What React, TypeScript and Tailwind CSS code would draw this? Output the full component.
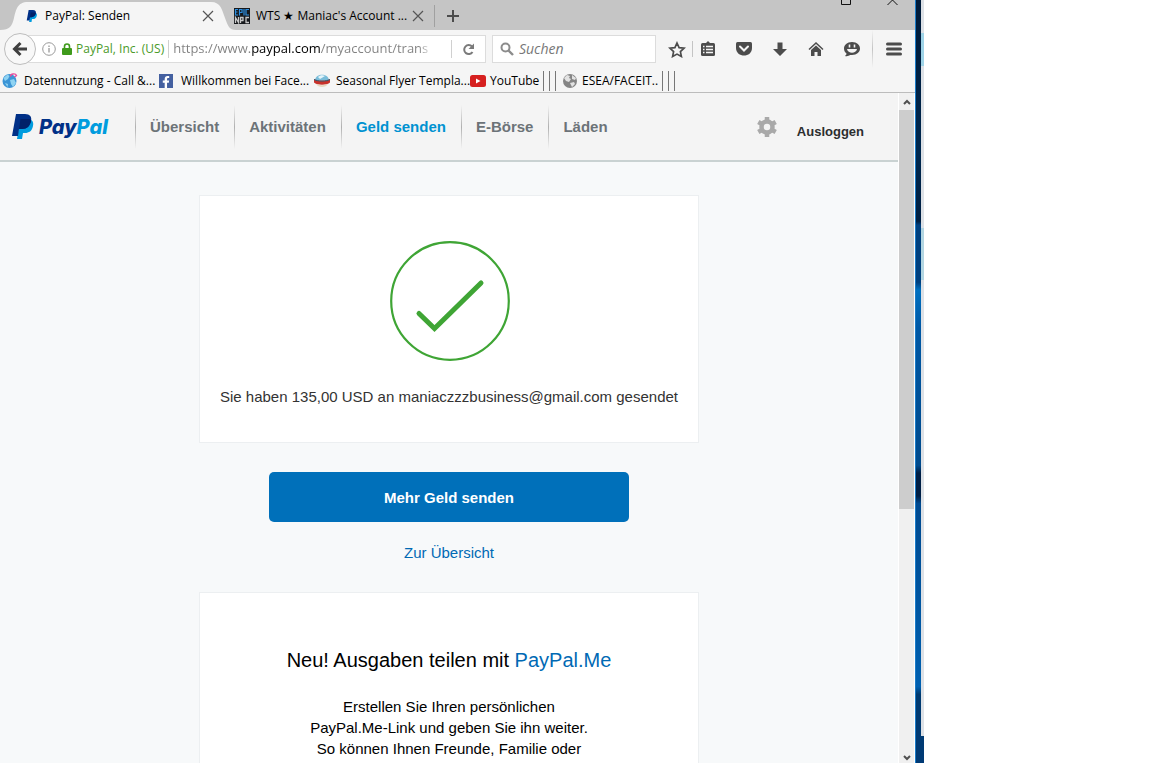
import type { ReactNode } from "react";
import { FaFacebookF } from "react-icons/fa";

const PayPalMark = ({ className }: { className: string }) => (
  <svg viewBox="0 0 22 25" className={className} aria-hidden="true">
    <path d="M8 5h8c4 0 6 3 5 7-1 5-4 7-8 7h-2l-1 6H5z" fill="#009cde" />
    <path d="M4 0h9c5 0 7 3 6 7-1 5-4 8-9 8H7l-1 7H0z" fill="#003087" />
    <path d="M8.500 5H16c1.500 0 2.500.4 3 1v1c-1 5-4 8-9 8H7z" fill="#012169" />
  </svg>
);

const CloseIcon = () => (
  <svg viewBox="0 0 12 12" className="size-3" aria-hidden="true">
    <path d="M1 1l10 10M11 1L1 11" stroke="#555" strokeWidth="1.2" fill="none" />
  </svg>
);

const EpicIcon = () => (
  <svg viewBox="0 0 16 16" className="size-4 shrink-0" aria-hidden="true">
    <path d="M0 0h16v16H0z" fill="#17191c" />
    <path d="M4 1.500H1.500v5.500H4M1.500 4h2M5.500 7.500v-6H8v3H5.500M10 1v6.500M15 1.500h-3V7h3" stroke="#2e8fe0" strokeWidth="1.2" fill="none" />
    <path d="M1.500 15V9.500l3 5V9M6.500 15V9.500H9v3H6.500M15 9.500h-3v5h3" stroke="#c9c9c9" strokeWidth="1.300" fill="none" />
  </svg>
);

const GlobeIcon = () => (
  <svg viewBox="0 0 16 16" className="size-4 shrink-0" aria-hidden="true">
    <circle cx="7.500" cy="8" r="7" fill="#3c95d6" />
    <path d="M1.500 5l4-3.500 2 1.500-1.500 3-3 2zM8 7l4-1 2 4-3 4-2-3zM3 10l3 1-.5 3z" fill="#8fd3f2" />
    <path d="M8.500 3.500c0-3 5-3.500 6-1l-2 1.500" stroke="#ea4c9b" strokeWidth="1.400" fill="none" />
  </svg>
);

const FlyerIcon = () => (
  <svg viewBox="0 0 16 16" className="size-4 shrink-0" aria-hidden="true">
    <path d="M1 7c1-7 13-7 14 0z" fill="#79bcd9" />
    <path d="M4 4c2-2 5-2 7-1L6 6z" fill="#e4f4fa" />
    <path d="M0 6c4 2 12 2 16 0v3.500c-3 3-13 3-16 0z" fill="#c8322b" />
    <path d="M0 6.500c4 2 12 2 16 0" stroke="#23607a" fill="none" />
    <path d="M2 11c3 1.500 9 1.500 12 0-2 4-10 4-12 0z" fill="#e8d8c0" />
  </svg>
);

const GrayGlobeIcon = () => (
  <svg viewBox="0 0 16 16" className="size-4 shrink-0" aria-hidden="true">
    <circle cx="8" cy="8" r="7" fill="#858585" />
    <path d="M2 5l3-3 3 1-1 2 2 1-2 3-3-1zM10 2l4 3-1 2-3-1zM8 10l4-1 1 2-3 3z" fill="#e2e2e2" />
  </svg>
);

const YouTubeIcon = () => (
  <svg viewBox="0 0 16 12" className="h-3 w-4 shrink-0" aria-hidden="true">
    <rect width="16" height="12" rx="2.500" fill="#d6201f" />
    <path d="M6 3.500v5L10.500 6z" fill="#fff" />
  </svg>
);

const FacebookIcon = () => (
  <span className="flex size-3.5 shrink-0 items-end justify-center bg-[#4460a0]">
    <FaFacebookF className="size-3 text-white" />
  </span>
);

const toolbarIcons: { label: string; icon: ReactNode }[] = [
  {
    label: "Lesezeichen anzeigen",
    icon: (
      <>
        <path d="M6 2.500h4M8 .5v2" stroke="#4c4c4c" strokeWidth="2" />
        <rect x="1" y="2" width="14" height="13" rx="1.500" fill="#4c4c4c" />
        <path d="M3 5.500h1.500M6 5.500h7M3 8.500h1.500M6 8.500h7M3 11.500h1.500M6 11.500h7" stroke="#f5f5f5" strokeWidth="1.500" />
      </>
    ),
  },
  {
    label: "Pocket",
    icon: (
      <>
        <path d="M1.500 1h13Q16 1 16 2.500V7c0 10-16 10-16 0V2.500Q0 1 1.500 1z" fill="#4c4c4c" />
        <path d="M4 5.500l4 4 4-4" stroke="#f5f5f5" strokeWidth="2" strokeLinecap="round" fill="none" />
      </>
    ),
  },
  {
    label: "Downloads",
    icon: <path d="M5.500 1.500h5V8H15l-7 7-7-7h4.500z" fill="#4c4c4c" />,
  },
  {
    label: "Startseite",
    icon: (
      <>
        <path d="M1 8.500l7-6.500 7 6.500" stroke="#4c4c4c" strokeWidth="1.500" fill="none" />
        <path d="M3 9l5-4.500L13 9v6H9.500v-4h-3v4H3z" fill="#4c4c4c" />
      </>
    ),
  },
  {
    label: "Chat",
    icon: (
      <>
        <path d="M8 1c5 0 8 3 8 6.500S13 14 8 14l-2 0c-1 1-3 1.500-5 1 1-1 1.500-1.500 1.500-2.500C1 11.500 0 9.500 0 7.500 0 4 3 1 8 1z" fill="#4c4c4c" />
        <path d="M5.500 3.500v3M10.500 3.500v3" stroke="#f5f5f5" strokeWidth="1.600" />
        <path d="M3 8h10c-1 5-9 5-10 0z" fill="#f5f5f5" />
      </>
    ),
  },
];

const navItems = ["Übersicht", "Aktivitäten", "Geld senden", "E-Börse", "Läden"];

const TabStrip = () => (
  <div className="flex h-[30px] items-stretch bg-[#c5c5c5]">
    <div className="relative flex w-[233px] items-center pt-0.5 pr-[19px] pl-6">
      <svg viewBox="0 0 236 30" className="absolute top-0 left-0 h-[30px] w-[236px]" aria-hidden="true">
        <path d="M0 30C10 30 12 26 14 18S17 2 28 2H211C221 2 222 10 225 18S229 30 236 30z" fill="#f5f5f5" />
      </svg>
      <PayPalMark className="relative mr-[7px] ml-0.5 size-3" />
      <span className="relative flex-1">PayPal: Senden</span>
      <button type="button" aria-label="Tab schließen" className="relative">
        <CloseIcon />
      </button>
    </div>
    <div className="flex w-[202px] items-center gap-1.5 pt-0.5 pl-px">
      <EpicIcon />
      <span className="min-w-0 flex-1 whitespace-nowrap">WTS ★ Maniac's Account ...</span>
      <button type="button" aria-label="Tab schließen" className="mr-1">
        <CloseIcon />
      </button>
      <span className="h-[22px] w-px shrink-0 bg-[#a0a0a0]" />
    </div>
    <button type="button" aria-label="Neuer Tab" className="px-3 pt-0.5">
      <svg viewBox="0 0 12 12" className="size-3" aria-hidden="true">
        <path d="M6 0v12M0 6h12" stroke="#4c4c4c" strokeWidth="2" />
      </svg>
    </button>
    <div className="ml-auto flex items-start gap-9 pr-[17px]">
      <button type="button" aria-label="Maximieren">
        <svg viewBox="0 0 10 5" className="h-[5px] w-2.5" aria-hidden="true">
          <path d="M.5 0v4.500h9V0" stroke="#111" fill="none" />
        </svg>
      </button>
      <button type="button" aria-label="Schließen">
        <svg viewBox="0 0 11 5" className="h-[5px] w-[11px]" aria-hidden="true">
          <path d="M.5 5l5-5 5 5" stroke="#111" fill="none" />
        </svg>
      </button>
    </div>
  </div>
);

const Toolbar = () => (
  <div className="flex h-[38px] items-center bg-[#f5f5f5] pl-1">
    <button
      type="button"
      aria-label="Zurück"
      className="z-10 flex size-8 shrink-0 items-center justify-center rounded-full border border-[#bdbdbd] bg-[#f8f8f8]"
    >
      <svg viewBox="0 0 16 16" className="size-4" aria-hidden="true">
        <path d="M8.500 2L2.500 8l6 6M3 8h12" stroke="#404040" strokeWidth="3" fill="none" />
      </svg>
    </button>
    <div className="-ml-3 flex h-7 min-w-0 flex-1 items-center border border-[#dcdcdc] bg-white pl-[17px]">
      <svg viewBox="0 0 14 14" className="mr-1.5 size-3.5 shrink-0" aria-hidden="true">
        <circle cx="7" cy="7" r="6.300" stroke="#999" fill="none" />
        <path d="M7 6v4.500M7 3.500V5" stroke="#999" strokeWidth="1.300" />
      </svg>
      <svg viewBox="0 0 10 12" className="mr-1 h-3 w-2.5 shrink-0" aria-hidden="true">
        <path d="M2.500 6V3.500a2.500 2.500 0 015 0V6" stroke="#3f9a1c" strokeWidth="1.600" fill="none" />
        <rect y="5" width="10" height="7" rx="1" fill="#3f9a1c" />
      </svg>
      <span className="shrink-0 whitespace-nowrap text-[#4a9a28]">PayPal, Inc. (US)</span>
      <span className="mx-1 h-[18px] w-px shrink-0 bg-[#d0d0d0]" />
      <input
        type="text"
        aria-label="Adresse"
        defaultValue="https://www.paypal.com/myaccount/trans"
        className="min-w-0 flex-1 bg-[linear-gradient(to_right,#808080_78px,#000_78px,#000_147px,#808080_147px,#808080_246px,transparent_260px)] bg-clip-text text-[13px] text-transparent outline-none"
      />
      <span className="ml-5 h-[18px] w-px shrink-0 bg-[#d0d0d0]" />
      <button type="button" aria-label="Neu laden" className="px-2.5">
        <svg viewBox="0 0 13 13" className="size-[13px]" aria-hidden="true">
          <path d="M10 3.500A4.500 4.500 0 1010.500 9" stroke="#7a7a7a" strokeWidth="2" fill="none" />
          <path d="M12 .5V6H6.500z" fill="#7a7a7a" />
        </svg>
      </button>
    </div>
    <label className="ml-1.5 flex h-7 w-[164px] items-center border border-[#dcdcdc] bg-white pl-[7px]">
      <svg viewBox="0 0 14 14" className="mr-[5px] size-3.5 shrink-0" aria-hidden="true">
        <circle cx="5.500" cy="5.500" r="4" stroke="#8c8c8c" strokeWidth="2" fill="none" />
        <path d="M8.500 8.500l4.500 4.500" stroke="#8c8c8c" strokeWidth="2.400" />
      </svg>
      <input
        type="text"
        aria-label="Suchen"
        placeholder="Suchen"
        className="min-w-0 flex-1 text-sm italic outline-none placeholder:text-[#777]"
      />
    </label>
    <button type="button" aria-label="Lesezeichen hinzufügen" className="ml-3 pr-1.5">
      <svg viewBox="0 0 18 17" className="h-[17px] w-[18px]" aria-hidden="true">
        <path d="M9 2l2.100 4.600 5 .6-3.700 3.400 1 4.900L9 13.100l-4.400 2.400 1-4.900L1.900 7.200l5-.6z" stroke="#4c4c4c" strokeWidth="1.700" fill="none" />
      </svg>
    </button>
    <span className="h-4 w-px bg-[#c4c4c4]" />
    <div className="ml-[7px] flex gap-5">
      {toolbarIcons.map((item) => (
        <button key={item.label} type="button" aria-label={item.label}>
          <svg viewBox="0 0 16 16" className="size-4" aria-hidden="true">
            {item.icon}
          </svg>
        </button>
      ))}
    </div>
    <span className="ml-3 h-full w-px bg-linear-to-b from-transparent via-[#c4c4c4] to-transparent" />
    <button type="button" aria-label="Menü" className="px-[13px]">
      <svg viewBox="0 0 16 14" className="h-3.5 w-4" aria-hidden="true">
        <path d="M1.500 2h13M1.500 7h13M1.500 12h13" stroke="#4c4c4c" strokeWidth="3" strokeLinecap="round" />
      </svg>
    </button>
  </div>
);

const Separators = () => (
  <span className="flex gap-[5px]">
    <span className="h-5 w-px bg-[#777]" />
    <span className="h-5 w-px bg-[#777]" />
    <span className="h-5 w-px bg-[#777]" />
  </span>
);

const Bookmark = ({ icon, label, className }: { icon: ReactNode; label: string; className: string }) => (
  <a href="#" className={`flex items-center whitespace-nowrap ${className}`}>
    {icon}
    {label}
  </a>
);

const BookmarksBar = () => (
  <div className="flex h-[25px] items-center border-b border-[#bcbcbc] bg-[#f5f5f5] pt-px pl-0.5">
    <Bookmark icon={<GlobeIcon />} label="Datennutzung - Call &..." className="w-[157px] gap-1.5" />
    <Bookmark icon={<FacebookIcon />} label="Willkommen bei Face..." className="w-[155px] gap-2" />
    <Bookmark icon={<FlyerIcon />} label="Seasonal Flyer Templa..." className="w-[156px] gap-1.5" />
    <Bookmark icon={<YouTubeIcon />} label="YouTube" className="w-[73px] gap-1" />
    <Separators />
    <Bookmark icon={<GrayGlobeIcon />} label="ESEA/FACEIT.." className="ml-1.5 w-[100px] gap-1" />
    <Separators />
  </div>
);

const SiteHeader = () => (
  <header className="flex h-[69px] shrink-0 items-center border-b-2 border-[#c9d2d2] bg-[#f4f4f4] pl-3">
    <a href="#" className="flex w-[123px] items-center gap-[5px]">
      <PayPalMark className="h-[25px] w-[22px]" />
      <span className="font-['Inter'] text-[20px] leading-6 font-extrabold text-[#009cde] italic">
        <span className="text-[#003087]">Pay</span>Pal
      </span>
    </a>
    <nav className="flex">
      {navItems.map((item) => (
        <div key={item} className="flex items-center">
          <span className="h-11 w-px bg-linear-to-b from-transparent via-[#b0b0b0] to-transparent" />
          <a
            href="#"
            className={`pr-[15px] pl-3.5 text-[15px] leading-5 font-bold whitespace-nowrap ${
              item === "Geld senden" ? "text-[#0092d1]" : "text-[#6c7378]"
            }`}
          >
            {item}
          </a>
        </div>
      ))}
    </nav>
    <button type="button" aria-label="Einstellungen" className="ml-auto">
      <svg viewBox="0 0 20 20" className="size-5" aria-hidden="true">
        <circle cx="10" cy="10" r="5.500" stroke="#a9a9a9" strokeWidth="4.500" fill="none" />
        <path
          d="M10 0v4M10 16v4M1.300 5l3.500 2M15.200 13l3.500 2M1.300 15l3.500-2M15.200 7l3.500-2"
          stroke="#a9a9a9"
          strokeWidth="4.500"
        />
      </svg>
    </button>
    <a href="#" className="mr-[34px] ml-5 pt-2.5 text-[13px] leading-5 font-bold text-[#2c2e2f]">
      Ausloggen
    </a>
  </header>
);

const SentPage = () => (
  <div className="flex min-w-0 flex-1 flex-col overflow-hidden bg-[#f7f9fa] font-['Liberation_Sans',sans-serif] text-[15px] leading-[21px]">
    <SiteHeader />
    <main className="flex flex-col items-center pt-[33px] text-center">
      <section className="flex w-full max-w-[500px] flex-col items-center border border-[#eceff1] bg-white pt-[45px] pb-[35px] text-[#333]">
        <svg viewBox="0 0 120 120" className="ml-0.5 size-[120px]" aria-hidden="true">
          <circle cx="60" cy="60" r="58.800" stroke="#3fa535" strokeWidth="2.200" fill="none" />
          <path d="M29 72.500L44.500 87.500L91 42" stroke="#3fa535" strokeWidth="5" strokeLinecap="round" fill="none" />
        </svg>
        <p className="mt-[25px]">Sie haben 135,00 USD an maniaczzzbusiness@gmail.com gesendet</p>
      </section>
      <button
        type="button"
        className="mt-[29px] h-[50px] w-full max-w-[360px] rounded-[5px] bg-[#0070ba] font-bold text-white"
      >
        Mehr Geld senden
      </button>
      <a href="#" className="mt-5 text-[#0069b4]">
        Zur Übersicht
      </a>
      <section className="mt-[29px] w-full max-w-[500px] border border-[#eceff1] bg-white pt-[55px] pb-14 text-black">
        <h2 className="text-[20px] leading-6">
          Neu! Ausgaben teilen mit{" "}
          <a href="#" className="text-[#0069b4]">
            PayPal.Me
          </a>
        </h2>
        <p className="mt-6">
          Erstellen Sie Ihren persönlichen
          <br />
          PayPal.Me-Link und geben Sie ihn weiter.
          <br />
          So können Ihnen Freunde, Familie oder
        </p>
      </section>
    </main>
  </div>
);

const ScrollBar = () => (
  <div className="flex w-[17px] shrink-0 flex-col border-x border-white bg-[#f0f0f0]">
    <div className="flex h-[17px] shrink-0 items-center justify-center">
      <svg viewBox="0 0 8 6" className="h-1.5 w-2" aria-hidden="true">
        <path d="M1 5l3-3 3 3" stroke="#505050" strokeWidth="2" fill="none" />
      </svg>
    </div>
    <div className="min-h-0 flex-1">
      <div className="h-[62%] bg-[#cdcdcd]" />
    </div>
    <div className="flex h-2.5 shrink-0 items-center justify-center">
      <svg viewBox="0 0 8 6" className="h-1.5 w-2" aria-hidden="true">
        <path d="M1 1l3 3 3-3" stroke="#505050" strokeWidth="2" fill="none" />
      </svg>
    </div>
  </div>
);

// Sliver of the desktop that shows beside the browser window
const DesktopEdge = () => (
  <div className="flex border-l border-[#1a7cc9] bg-[linear-gradient(#001a38_0%,#00284f_20%,#001f42_29%,#00407f_29.500%,#00407f_37%,#0070c0_38%,#0058a5_43%,#004a8c_61%,#001f45_62%,#001f45_65%,#004a90_66%,#0060b0_90%,#003a70_91%,#003a75_100%)]">
    <div className="ml-[5px] h-[96.5%] flex-1 bg-[linear-gradient(#dde1e6_4.500%,#9fd4e8_4.500%,#9fd4e8_9%,#dde1e6_9%,#dde1e6_31%,#b3d6e2_31%,#b3d6e2_38%,#dde1e6_38%)]" />
  </div>
);

const App = () => {
  return (
    <div className="grid h-screen grid-cols-[minmax(0,915fr)_9px_228fr] overflow-hidden bg-white">
      <div className="flex min-h-0 flex-col overflow-hidden font-['Open_Sans',sans-serif] text-xs text-black">
        <TabStrip />
        <Toolbar />
        <BookmarksBar />
        <div className="flex min-h-0 flex-1">
          <SentPage />
          <ScrollBar />
        </div>
      </div>
      <DesktopEdge />
    </div>
  );
};

export default App;
